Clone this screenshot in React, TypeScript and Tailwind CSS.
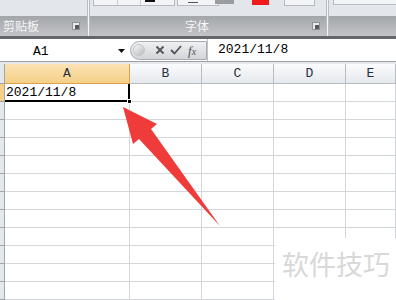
import React from 'react';

const mono = { fontFamily: '"Liberation Mono", "DejaVu Sans Mono", monospace' };
const cjk = { fontFamily: '"Noto Sans CJK SC", "Noto Sans", sans-serif' };

const columns = ['A', 'B', 'C', 'D', 'E'];
const rowCount = 12;

const Launcher: React.FC = () => (
  <div className="w-[8px] h-[8px] border border-[#8d9094] bg-[#e9eaeb] flex items-end justify-end">
    <div className="w-[4px] h-[4px] bg-[#55595e]" />
  </div>
);

const Ribbon: React.FC = () => (
  <div className="flex h-[36px] bg-[#e3e6ea]">
    {/* clipboard group */}
    <div className="w-[87px] flex flex-col">
      <div className="h-[16px]" />
      <div className="flex-1 flex items-center justify-between pl-[3px] pr-[7px] bg-gradient-to-b from-[#a3a6a9] to-[#c2c4c7]">
        <span className="text-[12px] text-[#f6f6f6] leading-none" style={cjk}>剪贴板</span>
        <Launcher />
      </div>
    </div>
    <div className="w-[3px] bg-[#f4f5f6] border-x border-[#b9bcc0]" />
    {/* font group */}
    <div className="w-[236px] flex flex-col">
      <div className="h-[16px] relative">
        <div className="absolute left-[3px] top-0 w-[82px] h-[6px] border border-t-0 border-[#b7bbc0] bg-[#f3f4f5] flex">
          <div className="w-[24px] border-r border-[#c9ccd0]" />
          <div className="w-[23px] border-r border-[#c9ccd0]" />
          <div className="w-[10px] h-[2px] bg-[#111] ml-[4px]" />
        </div>
        <div className="absolute left-[87px] top-0 w-[42px] h-[6px] border border-t-0 border-[#b7bbc0] bg-[#f3f4f5]">
          <div className="w-[10px] h-[1px] bg-[#555] ml-[10px] mt-[2px]" />
        </div>
        <div className="absolute left-[125px] top-0 w-[19px] h-[4px] bg-[#9a9c9f]" />
        <div className="absolute left-[162px] top-0 w-[17px] h-[5px] bg-[#f01a1a]" />
        <div className="absolute left-[194px] top-0 w-[31px] h-[6px] border border-t-0 border-[#b7bbc0] bg-[#f3f4f5]" />
      </div>
      <div className="flex-1 flex items-center justify-between pl-[95px] pr-[6px] bg-gradient-to-b from-[#a3a6a9] to-[#c2c4c7]">
        <span className="text-[12px] text-[#f6f6f6] leading-none" style={cjk}>字体</span>
        <Launcher />
      </div>
    </div>
    <div className="w-[3px] bg-[#f4f5f6] border-x border-[#b9bcc0]" />
    <div className="flex-1 flex flex-col">
      <div className="h-[16px] relative">
        <div className="absolute left-[4px] top-0 right-0 h-[5px] border border-t-0 border-r-0 border-[#b7bbc0] bg-[#f3f4f5]" />
      </div>
      <div className="flex-1 bg-gradient-to-b from-[#a3a6a9] to-[#c2c4c7]" />
    </div>
  </div>
);

const FormulaBar: React.FC = () => (
  <div className="flex h-[23px] bg-white border-b border-[#9da1a6] items-center">
    <div className="w-[130px] h-full flex items-center relative">
      <span className="absolute left-[33px] top-[3px] text-[13px] text-black" style={mono}>A1</span>
      <svg className="absolute left-[118px] top-[10px]" width="7" height="4" viewBox="0 0 7 4">
        <polygon points="0,0 7,0 3.5,4" fill="#111" />
      </svg>
    </div>
    <div className="w-[77px] h-[19px] rounded-l-full border border-[#a9adb2] bg-gradient-to-b from-[#eff0f1] to-[#d3d5d8] flex items-center">
      <div className="w-[12px] h-[12px] ml-[2px] rounded-full bg-gradient-to-br from-[#f7f7f7] to-[#b9bcc0] border border-[#c4c7ca]" />
      <svg className="ml-[10px]" width="10" height="10" viewBox="0 0 10 10">
        <path d="M1.5 1.5 L8.5 8.5 M8.5 1.5 L1.5 8.5" stroke="#505357" strokeWidth="1.8" />
      </svg>
      <svg className="ml-[5px]" width="12" height="10" viewBox="0 0 12 10">
        <path d="M1 5 L4.5 8.5 L11 1" stroke="#505357" strokeWidth="1.8" fill="none" />
      </svg>
      <span className="ml-[6px] text-[13px] italic text-[#505357] leading-none" style={{ fontFamily: '"Liberation Serif", serif' }}>
        f<span className="text-[10px]">x</span>
      </span>
    </div>
    <div className="w-[1px] h-full bg-[#c0c3c7]" />
    <span className="ml-[10px] text-[13px] text-black" style={mono}>2021/11/8</span>
  </div>
);

const Grid: React.FC = () => (
  <div className="grid grid-cols-[5px_125px_72px_72px_72px_1fr]">
    {/* header row */}
    <div className="h-[20px] bg-[#e4e8ed] border-r border-b border-[#9ea5ad]" />
    {columns.map((c) => (
      <div
        key={c}
        className={
          c === 'A'
            ? 'h-[20px] flex items-center justify-center border-r border-b border-[#d9a54a] bg-gradient-to-b from-[#fbe3b4] to-[#f5cf86]'
            : 'h-[20px] flex items-center justify-center border-r border-b border-[#b7bcc2] bg-gradient-to-b from-[#fafbfc] to-[#e6e9ed]'
        }
      >
        <span className="text-[13px] text-[#27323f] leading-none" style={mono}>{c}</span>
      </div>
    ))}
    {Array.from({ length: rowCount }).map((_, r) => (
      <React.Fragment key={r}>
        <div
          className={
            r === 0
              ? 'h-[18px] bg-[#f6d08a] border-r border-b border-[#9ea5ad]'
              : 'h-[18px] bg-[#e4e8ed] border-r border-b border-[#9ea5ad]'
          }
        />
        {columns.map((c) =>
          r === 0 && c === 'A' ? (
            <div key={c} className="h-[18px] relative border-r-2 border-b-2 border-black flex items-center">
              <span className="ml-[1px] text-[13px] text-black leading-none" style={mono}>2021/11/8</span>
              <div className="absolute right-[-4px] bottom-[-4px] w-[5px] h-[5px] bg-black border border-white" />
            </div>
          ) : (
            <div key={c} className="h-[18px] border-r border-b border-[#d3d7dc]" />
          )
        )}
      </React.Fragment>
    ))}
  </div>
);

const App: React.FC = () => {
  return (
    <div className="relative w-[396px] h-[300px] overflow-hidden bg-white">
      <Ribbon />
      <div className="h-[3px] bg-[#63676c]" />
      <FormulaBar />
      <div className="h-[2px] bg-[#e6e8eb]" />
      <Grid />

      {/* red arrow annotation */}
      <svg className="absolute left-0 top-0 pointer-events-none" width="396" height="300" viewBox="0 0 396 300">
        <polygon
          points="123,107 157,124 151,129 220,226 139,139 133,144"
          fill="#f03b3b"
        />
      </svg>

      {/* watermark */}
      <div className="absolute left-[275px] top-[238px] w-[121px] h-[62px] bg-white">
        <span className="absolute left-[7px] top-[12px] text-[27px] leading-none text-[#d8d8d8]" style={cjk}>软件技巧</span>
      </div>
    </div>
  );
};

export default App;
